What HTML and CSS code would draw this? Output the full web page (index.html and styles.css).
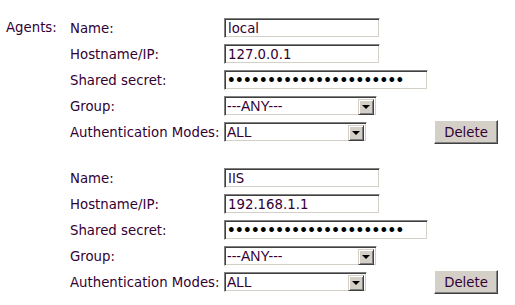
FILE: index.html
```html
<!DOCTYPE html>
<html lang="en">
<head>
    <meta charset="UTF-8">
    <title>Agents</title>
    <link rel="stylesheet" href="styles.css">
</head>
<body>

<div class="agents">
    <div class="agents-title">Agents:</div>
    <div class="agent-list">

        <div class="agent">
            <div class="row"><label>Name:</label><input type="text" class="field short" value="local"></div>
            <div class="row"><label>Hostname/IP:</label><input type="text" class="field short" value="127.0.0.1"></div>
            <div class="row"><label>Shared secret:</label><input type="password" class="field long" value="xxxxxxxxxxxxxxxxxxxxxx"></div>
            <div class="row"><label>Group:</label>
                <span class="select group"><select><option>---ANY---</option></select><span class="arrow"></span></span>
            </div>
            <div class="row"><label>Authentication Modes:</label>
                <span class="select modes"><select><option>ALL</option></select><span class="arrow"></span></span>
                <button class="delete">Delete</button>
            </div>
        </div>

        <div class="agent">
            <div class="row"><label>Name:</label><input type="text" class="field short" value="IIS"></div>
            <div class="row"><label>Hostname/IP:</label><input type="text" class="field short" value="192.168.1.1"></div>
            <div class="row"><label>Shared secret:</label><input type="password" class="field long" value="xxxxxxxxxxxxxxxxxxxxxx"></div>
            <div class="row"><label>Group:</label>
                <span class="select group"><select><option>---ANY---</option></select><span class="arrow"></span></span>
            </div>
            <div class="row"><label>Authentication Modes:</label>
                <span class="select modes"><select><option>ALL</option></select><span class="arrow"></span></span>
                <button class="delete">Delete</button>
            </div>
        </div>

    </div>
</div>

</body>
</html>
```

FILE: styles.css
```css
body {
    margin: 0;
    padding: 15px 0 0 6px;
    background: #fff;
    color: #330033;
    font-family: "DejaVu Sans", Verdana, sans-serif;
    font-size: 13.3px;
}

.agents {
    display: flex;
}

.agents-title {
    width: 64px;
    line-height: 26px;
}

.agent {
    margin-bottom: 20px;
}

.row {
    display: flex;
    align-items: center;
    height: 26px;
}

.row label {
    width: 154px;
}

/* classic inset border for text boxes and selects */
.field,
.select {
    box-sizing: border-box;
    height: 20px;
    border: 1px solid;
    border-color: #808080 #fff #fff #808080;
    box-shadow: inset 1px 1px #404040, inset -1px -1px #d4d0c8;
    background: #fff;
}

.field {
    padding: 0 3px;
    font-family: "DejaVu Sans", Verdana, sans-serif;
    font-size: 13.3px;
    color: #330033;
    outline: none;
}

.field.short {
    width: 156px;
}

.field.long {
    width: 204px;
    padding-left: 2px;
    font-size: 13.5px;
    font-weight: bold;
    letter-spacing: -0.6px;
    color: #000;
}

.select {
    position: relative;
    display: inline-block;
    padding: 1px;
}

.select.group {
    width: 153px;
}

.select.modes {
    width: 143px;
}

.select select {
    appearance: none;
    -webkit-appearance: none;
    display: block;
    width: 100%;
    height: 16px;
    margin: 0;
    border: 0;
    padding: 0 1px;
    background: transparent;
    font-family: "Liberation Sans", Arial, sans-serif;
    font-size: 14px;
    color: #330033;
    outline: none;
}

.select .arrow {
    position: absolute;
    top: 2px;
    right: 2px;
    width: 16px;
    height: 16px;
    box-sizing: border-box;
    background: #d4d0c8;
    border: 1px solid;
    border-color: #d4d0c8 #404040 #404040 #d4d0c8;
    box-shadow: inset 1px 1px #fff, inset -1px -1px #808080;
    pointer-events: none;
}

.select .arrow::after {
    content: "";
    position: absolute;
    left: 3px;
    top: 5px;
    border-left: 4px solid transparent;
    border-right: 4px solid transparent;
    border-top: 4px solid #000;
}

.delete {
    margin-left: 67px;
    width: 64px;
    height: 24px;
    padding: 0;
    background: #d4d0c8;
    border: 1px solid;
    border-color: #fff #404040 #404040 #fff;
    box-shadow: inset -1px -1px #808080;
    font-family: "DejaVu Sans", Verdana, sans-serif;
    font-size: 13.3px;
    color: #330033;
    cursor: pointer;
}
```
